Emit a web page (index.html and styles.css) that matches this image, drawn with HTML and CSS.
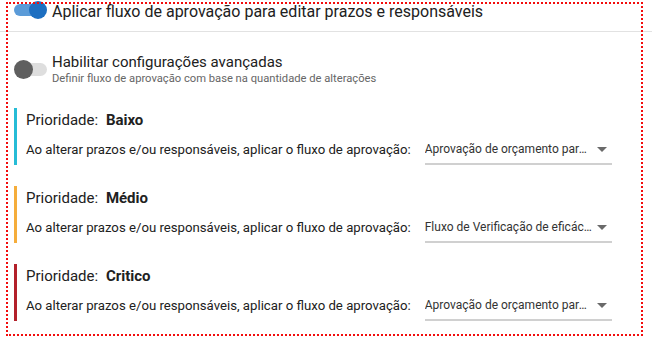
FILE: index.html
```html
<!DOCTYPE html>
<html lang="pt-BR">
<head>
    <meta charset="UTF-8">
    <meta name="viewport" content="width=device-width, initial-scale=1.0">
    <title>Fluxo de aprovação</title>
    <link rel="stylesheet" href="styles.css">
</head>
<body>
    <div class="panel">
        <div class="switch-row main-row">
            <span class="switch on"><span class="knob"></span></span>
            <span class="main-label">Aplicar fluxo de aprovação para editar prazos e responsáveis</span>
        </div>

        <div class="switch-row advanced-row">
            <span class="switch"><span class="knob"></span></span>
            <div class="switch-text">
                <div class="adv-label">Habilitar configurações avançadas</div>
                <div class="adv-hint">Definir fluxo de aprovação com base na quantidade de alterações</div>
            </div>
        </div>

        <div class="priority baixo">
            <div class="priority-title">Prioridade: <b>Baixo</b></div>
            <div class="priority-rule">
                <span class="rule-label">Ao alterar prazos e/ou responsáveis, aplicar o fluxo de aprovação:</span>
                <div class="select">
                    <span class="select-value">Aprovação de orçamento para ajustes</span>
                    <span class="caret"></span>
                </div>
            </div>
        </div>

        <div class="priority medio">
            <div class="priority-title">Prioridade: <b>Médio</b></div>
            <div class="priority-rule">
                <span class="rule-label">Ao alterar prazos e/ou responsáveis, aplicar o fluxo de aprovação:</span>
                <div class="select">
                    <span class="select-value">Fluxo de Verificação de eficácia das ações</span>
                    <span class="caret"></span>
                </div>
            </div>
        </div>

        <div class="priority critico">
            <div class="priority-title">Prioridade: <b>Critico</b></div>
            <div class="priority-rule">
                <span class="rule-label">Ao alterar prazos e/ou responsáveis, aplicar o fluxo de aprovação:</span>
                <div class="select">
                    <span class="select-value">Aprovação de orçamento para ajustes</span>
                    <span class="caret"></span>
                </div>
            </div>
        </div>
    </div>

    <!-- marcação de destaque -->
    <div class="highlight"></div>
</body>
</html>
```

FILE: styles.css
```css
body {
    margin: 0;
    font-family: Roboto, "Noto Sans", Arial, sans-serif;
    color: #212121;
    background-color: #fff;
    overflow: hidden;
}
.panel {
    width: 652px;
}
.switch-row {
    display: flex;
    align-items: center;
    padding-left: 14px;
}
.main-row {
    height: 20px;
    padding-bottom: 11px;
    border-bottom: 1px solid #e2e2e2;
}
.main-label {
    margin-left: 8px;
    margin-top: 3px;
    font-size: 16px;
    line-height: 20px;
}
.switch {
    position: relative;
    display: inline-block;
    width: 30px;
    height: 13px;
    border-radius: 7px;
    background-color: #dedede;
    flex-shrink: 0;
}
.switch .knob {
    position: absolute;
    top: -3px;
    left: -3px;
    width: 19px;
    height: 19px;
    border-radius: 50%;
    background-color: #5f5f5f;
}
.switch.on {
    height: 12px;
    background-color: #5b9bd8;
}
.switch.on .knob {
    left: auto;
    right: -3px;
    top: -3px;
    width: 18px;
    height: 18px;
    background-color: #1d6fc1;
}
.advanced-row {
    margin-top: 21px;
}
.advanced-row .switch {
    margin-left: 3px;
}
.switch-text {
    margin-left: 5px;
}
.adv-label {
    font-size: 15px;
    line-height: 19px;
}
.adv-hint {
    font-size: 11.2px;
    line-height: 14px;
    color: #666;
}
.priority {
    margin: 22px 0 0 14px;
    padding: 2px 0 1px 9px;
    border-left: 3px solid #26bcd6;
}
.priority + .priority {
    margin-top: 21px;
}
.priority.medio {
    border-left-color: #f5ad3b;
}
.priority.critico {
    border-left-color: #b3202a;
}
.priority-title {
    font-size: 15px;
    line-height: 20px;
}
.priority-title b {
    margin-left: 4px;
    font-weight: 700;
}
.priority-rule {
    display: flex;
    align-items: center;
    height: 28px;
    margin-top: 6px;
}
.rule-label {
    font-size: 13.2px;
    line-height: 20px;
}
.select {
    display: flex;
    align-items: center;
    width: 187px;
    height: 27px;
    margin-left: 14px;
    border-bottom: 2px solid #d0d0d0;
}
.select-value {
    flex: 1;
    min-width: 0;
    font-size: 12px;
    color: #333;
    white-space: nowrap;
    overflow: hidden;
    text-overflow: ellipsis;
}
.caret {
    width: 0;
    height: 0;
    margin: 0 5px 0 4px;
    border-left: 5px solid transparent;
    border-right: 5px solid transparent;
    border-top: 5px solid #6a6a6a;
}
.highlight {
    position: absolute;
    left: 6px;
    top: 2px;
    width: 633px;
    height: 330px;
    border: 2px dotted #f20d0d;
    pointer-events: none;
}
```
